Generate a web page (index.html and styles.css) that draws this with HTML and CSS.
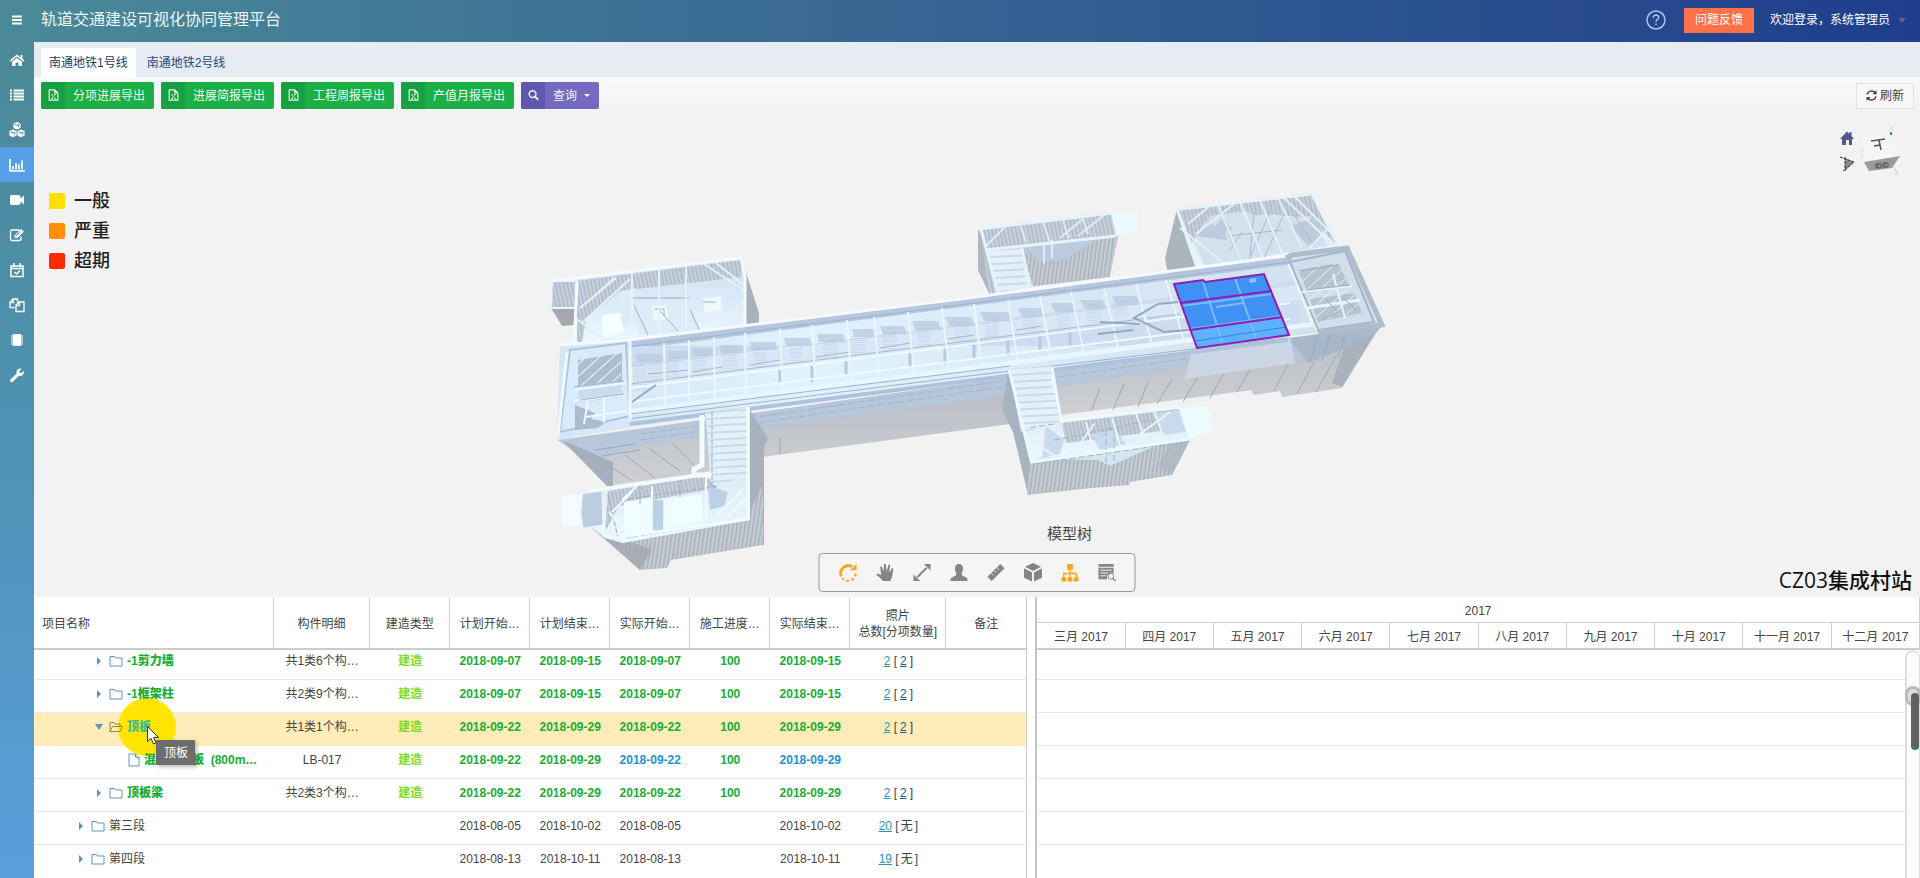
FILE: index.html
```html
<!DOCTYPE html>
<html lang="zh-CN">
<head>
<meta charset="utf-8">
<title>轨道交通建设可视化协同管理平台</title>
<link rel="stylesheet" href="styles.css">
</head>
<body>
<svg class="defs" aria-hidden="true">
  <symbol id="excel" viewBox="0 0 14 16"><path d="M1.5 1.5h7l4 4v9h-11zM8.500 1.500v4h4" fill="none" stroke="currentColor" stroke-width="1.400"/><path d="M4.800 7.500l4.200 5M9 7.500l-4.200 5M4 12.500h2M8 12.500h2M4 7.500h2M8 7.500h2" fill="none" stroke="currentColor"/></symbol>
  <symbol id="folder" viewBox="0 0 14 12"><path d="M1 1.500h4.500l1 1.500h6.500v8h-12z" fill="none" stroke="currentColor"/></symbol>
  <symbol id="opened" viewBox="0 0 14 12"><path d="M1 10.500v-9h4l1 1.500h5v2.500M1 10.500l2.500-5h10l-2.500 5z" fill="none" stroke="currentColor"/></symbol>
  <symbol id="file" viewBox="0 0 12 14"><path d="M1 1h6.500l3.500 3.500v8.500h-10zM7.500 1v3.500h3.500" fill="none" stroke="currentColor"/></symbol>
</svg>

<header class="topbar">
  <button class="menu" aria-label="菜单"><svg viewBox="0 0 10 10"><path d="M0 1.500h10M0 5h10M0 8.500h10" stroke="currentColor" stroke-width="1.800"/></svg></button>
  <h1>轨道交通建设可视化协同管理平台</h1>
  <a class="help" href="#" aria-label="帮助"><svg viewBox="0 0 20 20"><circle cx="10" cy="10" r="9" fill="none" stroke="currentColor" stroke-width="1.500"/><path d="M7.300 7.800c0-3.600 5.400-3.600 5.400-.4 0 2-2.700 2-2.700 4.300M10 13.500v1.800" fill="none" stroke="currentColor" stroke-width="1.500"/></svg></a>
  <button class="feedback">问题反馈</button>
  <button class="user">欢迎登录，系统管理员<i></i></button>
</header>

<div class="shell">
  <nav class="side">
    <a href="#" aria-label="首页"><svg viewBox="0 0 16 16"><path d="M8 2.500l7.500 6-1 1.200L8 4.600 1.500 9.700l-1-1.200zM11.500 3h2v4l-2-1.700zM8 5.800l5 4V14H9.500v-3.500h-3V14H3V9.800z" fill="currentColor"/></svg></a>
    <a href="#" aria-label="列表"><svg viewBox="0 0 16 16"><path d="M1 3.500h2M4.500 3.500H15M1 6.500h2M4.500 6.500H15M1 9.500h2M4.500 9.500H15M1 12.500h2M4.500 12.500H15" stroke="currentColor" stroke-width="2"/></svg></a>
    <a href="#" aria-label="模型"><svg viewBox="0 0 16 16"><g fill="currentColor"><path d="M8 0l3.500 1.500v4.500L8 7.500 4.500 6V1.500z"/><path d="M4 7.500L7.600 9v4.500L4 15.200.4 13.500V9zM12 7.500l3.600 1.500v4.500L12 15.200l-3.600-1.700V9z"/></g><path d="M5.500 2.300L8 3.300l2.500-1M1.500 10L4 11l2.500-1M9.500 10l2.500 1 2.500-1M5.500 12.600v-1.400M13.500 12.600v-1.400M9.500 5V3.600" fill="none" stroke="#4c8fa3"/></svg></a>
    <a href="#" class="on" aria-label="进度统计"><svg viewBox="0 0 16 16"><path d="M1 2v12h15M4 12.500V9M7 12.500V6M10 12.500V7.500M13 12.500V3.500" fill="none" stroke="currentColor" stroke-width="1.700"/></svg></a>
    <a href="#" aria-label="视频"><svg viewBox="0 0 16 16"><path d="M3 3h6.500a2 2 0 0 1 2 2v1.500L15 3.500v9l-3.500-3V11a2 2 0 0 1-2 2H3a2 2 0 0 1-2-2V5a2 2 0 0 1 2-2z" fill="currentColor"/></svg></a>
    <a href="#" aria-label="编辑"><svg viewBox="0 0 16 16"><path d="M10.500 3H3a1.500 1.500 0 0 0-1.500 1.500v7.500A1.500 1.500 0 0 0 3 13.500h7.500A1.500 1.500 0 0 0 12 12v-2.500" fill="none" stroke="currentColor" stroke-width="1.300"/><path d="M5.500 11V8.500L12 2l3 2.500L8.500 11z" fill="currentColor"/><path d="M6.500 9.500l5-5" stroke="#4c8fa3"/></svg></a>
    <a href="#" aria-label="计划"><svg viewBox="0 0 16 16"><path d="M2 4h12v10.500H2zM2 6.500h12M5 1v4M11 1v4M5.500 10l2 2L11 8.500" fill="none" stroke="currentColor" stroke-width="1.500"/></svg></a>
    <a href="#" aria-label="复制"><svg viewBox="0 0 16 16"><path d="M5.500 10.500H1V5l3-3h4.500v3M4.500 2v3.500H1M7 14.500V8l3-3h5v9.500zM10.500 5v3.500H7" fill="none" stroke="currentColor" stroke-width="1.300"/></svg></a>
    <a href="#" aria-label="文档"><svg viewBox="0 0 16 16"><rect x="3.500" y="2" width="9" height="12" rx="1.500" fill="currentColor"/><path d="M2.500 3.500v9M13.500 3.500v9" stroke="currentColor" stroke-dasharray="1 1"/></svg></a>
    <a href="#" aria-label="工具"><svg viewBox="0 0 16 16"><path d="M1.500 12.500l6-6a4 4 0 0 1 5.200-4.800L10.500 4l.3 1.700 1.700.3 2.300-2.200a4 4 0 0 1-5 5l-6 5.900a1.600 1.600 0 0 1-2.300-2.200z" fill="currentColor"/></svg></a>
  </nav>

  <main class="main">
    <div class="tabs"><a href="#" class="on">南通地铁1号线</a><a href="#">南通地铁2号线</a></div>
    <div class="tools">
      <button class="btn"><span><svg><use href="#excel"/></svg></span>分项进展导出</button>
      <button class="btn"><span><svg><use href="#excel"/></svg></span>进展简报导出</button>
      <button class="btn"><span><svg><use href="#excel"/></svg></span>工程周报导出</button>
      <button class="btn"><span><svg><use href="#excel"/></svg></span>产值月报导出</button>
      <button class="btn query"><span><svg viewBox="0 0 12 12"><circle cx="5" cy="5" r="3.700" fill="none" stroke="currentColor" stroke-width="1.600"/><path d="M7.700 7.700l3.500 3.500" stroke="currentColor" stroke-width="2"/></svg></span>查询<i></i></button>
      <button class="refresh"><svg viewBox="0 0 12 12"><path d="M1.200 5A5 5 0 0 1 10 3M10.800 7A5 5 0 0 1 2 9" fill="none" stroke="currentColor" stroke-width="1.600"/><path d="M11.500 0v4.500H7zM.5 12V7.500H5z" fill="currentColor"/></svg>刷新</button>
    </div>

    <section class="viewer">
      <svg class="model" viewBox="34 112 1886 485" role="img" aria-label="CZ03集成村站模型">
        <defs>
          <linearGradient id="lit" x1="0" y1="0" x2="1" y2="0"><stop offset="0" stop-color="#d4e5f6"/><stop offset=".3" stop-color="#e0f2fd"/><stop offset="1" stop-color="#d0dfec"/></linearGradient>
          <linearGradient id="floor" x1="0" y1="0" x2="0" y2="1"><stop offset="0" stop-color="#cbdcf0"/><stop offset="1" stop-color="#ecfaff"/></linearGradient>
          <linearGradient id="wall" x1="0" y1="0" x2="0" y2="1"><stop offset="0" stop-color="#b7bdc6"/><stop offset="1" stop-color="#cfd0d3"/></linearGradient>
          <pattern id="ribs" width="4" height="8" patternUnits="userSpaceOnUse" patternTransform="skewX(-8)"><rect width="4" height="8" fill="#b0b6bf"/><path d="M1 0v8" stroke="#ced4da" stroke-width="1.500"/></pattern>
          <pattern id="fine" width="4" height="8" patternUnits="userSpaceOnUse" patternTransform="skewX(12)"><rect width="4" height="8" fill="#b4becb"/><path d="M1 0v8" stroke="#ccd8e3" stroke-width="1.500"/></pattern>
          <pattern id="diag" width="9" height="9" patternUnits="userSpaceOnUse" patternTransform="rotate(48)"><path d="M0 0v9" stroke="#eef8fd" stroke-width="2"/></pattern>
          <pattern id="steps" width="9" height="7" patternUnits="userSpaceOnUse" patternTransform="skewY(-3)"><rect width="9" height="7" fill="#e2f1fa"/><path d="M0 1h9" stroke="#b4c5d4"/></pattern>
          <clipPath id="slab"><path d="M630 347L1290 264L1318 326L630 415z"/></clipPath>
        </defs>

        <!-- north-west annex -->
        <path d="M741 257L759 313V330L741 340z" fill="#a9b1bb"/>
        <path d="M551 308H575V325L562 326z" fill="#a5a8ae"/>
        <path d="M552 281H577V308H551z" fill="url(#fine)" stroke="#e8f3fa" stroke-width="2"/>
        <path d="M575 280L741 258L745 275V337L575 347z" fill="url(#floor)"/>
        <path d="M577 281L741 260V277L620 291L586 320L582 342H577z" fill="url(#fine)"/>
        <path d="M618 292l18-4v36l-18 4zM634 303h54l12 28-62 4z" fill="#dcecf9"/>
        <path d="M602 315l18-2 4 18-22 8z" fill="#f5ffff"/>
        <path d="M703 298l18-2 1 14-17 3zM652 306l14-1 3 14-15 2z" fill="#edf9fe"/>
        <path d="M703 302h13M654 309h10v7M634 305l14 30M658 309l20 22M690 309l12 27M633 298h56" stroke="#9db0c3" fill="none"/>
        <path d="M632 273v66M659 269v65M686 266v63M580 308l36-30M583 322l47-43M590 300l24-22M710 336l36-38M722 336l24-25M704 264l41 27M716 263l29 23M575 318l40 28" stroke="#e6f2fa" stroke-width="2" fill="none"/>
        <path d="M552 281L741 258L745 276V336M577 281L574 346" fill="none" stroke="#f3fbff" stroke-width="3"/>

        <!-- north entrance -->
        <path d="M978 230V270L992 300H1005L990 235z" fill="#afb9c4"/>
        <path d="M1024 240L1118 236L1110 277L1028 287z" fill="url(#ribs)"/>
        <path d="M980 229L1112 213L1116 236L1030 247L1024 262L1030 298H990z" fill="url(#fine)"/>
        <path d="M988 250L1022 247L1036 298L998 303z" fill="url(#steps)"/>
        <path d="M1026 247L1106 235L1066 259L1040 262z" fill="#bccbdf"/>
        <path d="M1060 238l24-20M1078 236l30-24M986 246l20-20M1020 224l6 18M1042 220l8 22M1062 218l7 20M1082 216l6 18M1044 242v22M1052 240v18" stroke="#dfecf5" stroke-width="2"/>
        <path d="M979 229L1112 213M985 250L1116 236M981 229L1000 301M1022 248l9 50" fill="none" stroke="#e6f3fa" stroke-width="3"/>
        <path d="M1111 213l26-1v21l-21 3z" fill="#eafaff"/>

        <!-- north-east annex -->
        <path d="M1177 209L1165 258L1168 274H1200z" fill="#aab5be"/>
        <path d="M1177 209L1312 193L1340 248L1198 272z" fill="url(#floor)"/>
        <path d="M1179 211L1312 195L1336 244L1310 218L1268 214L1205 222L1192 243z" fill="url(#fine)"/>
        <path d="M1210 216l34-5 22 8 44-3 18 30-124 20-10-24z" fill="#d2e1ee"/>
        <path d="M1197 236l12-14 6 4 6-7 12 10-8 3 2 8zM1290 226l24-8 10 16-16 12z" fill="#bdccdd"/>
        <path d="M1222 216l18 44M1254 212l-4 44M1270 212l-22 50M1284 214l-20 44M1228 236l54-6M1230 250l12-18M1294 214l20 32" stroke="#a8b9c8" fill="none"/>
        <path d="M1218 205l24 58M1240 202l24 58M1260 200l24 58M1278 198l24 50M1188 224l24-20M1196 234l38-30M1294 196l36 36M1284 198l44 42M1310 248l20-22M1180 228l50 40" stroke="#e4f0f7" stroke-width="2" fill="none"/>
        <path d="M1198 270L1177 209L1312 194L1339 247" fill="none" stroke="#e8f3f9" stroke-width="3"/>

        <!-- station side walls -->
        <path d="M562 440L607 486L720 470L762 457L1010 424V377z" fill="url(#wall)"/>
        <path d="M1010 372L1060 415L1252 390L1253 395L1280 391L1282 397L1342 388L1378 330z" fill="url(#wall)"/>
        <path d="M557 440L1382 326L1372 338L1312 364L1290 352L1010 394L762 428L640 446L590 462z" fill="#b5c7dd" opacity=".85"/>
        <path d="M1288 338L1382 326L1368 340L1308 363z" fill="#a8b8c9"/>
        <path d="M1344 348l31-15-33 54-10-4z" fill="#a9b1ba"/>
        <path d="M562 440L607 486H613V462z" fill="#a6b0bd"/>
        <path d="M604 462l27 18M625 455l30 23M650 449l30 22M673 444l22 22M780 438v16M1100 388l-9 23M1124 384l-11 26M1148 382l-10 25M1172 379l-15 25M1198 376l-15 26M1224 373l-14 25M1250 369l-13 23M1288 364l-14 27M1314 362l-17 32M1336 356l-20 36" stroke="#a2a7ad" fill="none"/>
        <path d="M1192 349l98-13 5 27-110 16z" fill="#d0dbea" opacity=".8"/>
        <path d="M640 434L1010 380M640 440L1010 386M1050 378L1190 358M1312 352l50-7M1310 345l58-8" stroke="#9fb5cd" stroke-dasharray="7 3"/>
        <path d="M1318 336l-8 26M1330 334l-8 27M1346 333l-8 24M595 450l40-6M602 456l38-6" stroke="#98a8b9"/>

        <!-- station roof slab -->
        <path d="M560 345L628 338V344L960 303L1286 258L1292 254L1347 247L1383 325L1318 333L1288 336L625 428L557 440z" fill="url(#lit)"/>
        <path d="M628 340L1290 256L1294 264L628 350z" fill="#b0c2db" opacity=".9"/>
        <g clip-path="url(#slab)">
          <path d="M628 346H1300V280L628 368z" fill="#cddcee"/>
          <path d="M628 368L1300 285V300L628 385z" fill="#d9e8f6"/>
          <path d="M636 354h26l1 8h-26zM668 351h20v8h-20zM692 348h21l1 8h-21zM720 345h22l1 8h-22zM750 342h26l1 8h-26zM784 338h26l2 8h-26zM817 334h26l2 8h-26zM852 329h21l2 8h-21zM880 326h24l3 8h-24zM912 321h26l3 9h-26zM945 317h26l4 9h-26zM980 312h28l4 9h-28zM1018 308h24l4 9h-24zM1050 303h22l5 9h-22zM1080 300h22l5 9h-22zM1112 296h24l5 9h-24z" fill="#bccce1" opacity=".8"/>
          <path d="M640 362v30M655 360v24M672 358v20M700 354v20M730 350v20M760 348v20M796 344v20M830 340v20M858 336v18M890 332v20M924 328v20M962 322v20M992 318v20M1030 312v20M1064 308v20M1094 304v20M1120 300v18" stroke="#b1c4dd" stroke-dasharray="1 1" stroke-width="14" opacity=".35"/>
          <path d="M630 384L1180 314M648 374l42-4M692 372l30-5M750 365l30-5M816 357l34-5M880 348l30-5M948 339l26-4M1016 330l26-4M1110 326l42-6" stroke="#a5b8ca" fill="none"/>
          <path d="M780 368v16M812 364v18M846 360v16M910 352v16M945 346v18M974 342v16M1008 338v18M1040 334v16M1070 332v16" stroke="#b3c9e0" stroke-width="3"/>
          <path d="M630 388L1290 303M630 402L1290 319" stroke="#eefaff" stroke-width="2"/>
          <path d="M664 343l1 68M689 340v70M714 337l1 70M745 333l1 72M780 329l3 70M812 325l4 70M847 320l5 70M874 317l6 70M908 312l7 70M942 308l8 70M974 304l9 70M1008 300l11 70M1040 296l13 70M1071 292l14 66M1104 288l16 68M1136 284l18 68M1166 280l20 68M1288 262l26 66" stroke="#eaf6fd" stroke-width="2" fill="none"/>
          <path d="M630 412L1320 324" stroke="#e6f8ff" stroke-width="6"/>
          <path d="M1178 302l-20 2-24 14 30 14 26-2M1100 322l40 2M1098 334l35-4M632 402l24-17" stroke="#93a9bb" stroke-width="2" fill="none"/>
        </g>
        <path d="M628 347L960 305L1290 262M628 419L960 377L1286 338M630 414L1010 366" fill="none" stroke="#9cb2c9"/>
        <path d="M630 424L1288 340" stroke="#adc3db" stroke-width="4"/>
        <path d="M560 345L628 340L960 299L1286 256" fill="none" stroke="#f5faff" stroke-width="3"/>
        <!-- west end shaft -->
        <path d="M570 350L626 343L630 416L560 432z" fill="#d9ebfa" stroke="#b0c5da" stroke-width="2"/>
        <path d="M578 360l44-7v28l-44 5z" fill="#acbfd1"/>
        <path d="M578 388l44-6v15l-44 6z" fill="#c9ddee"/>
        <path d="M575 405l20 8-4 6 16 3-10 6-22 2z" fill="#abbccd"/>
        <path d="M577 359l44-6v28l-44 5z" fill="url(#diag)"/>
        <path d="M574 390l52-7M573 401l52-6M586 417l40-6M588 400l-4 24M604 396v27" stroke="#eefaff" stroke-width="2"/>
        <path d="M574 387l50-6M580 400l44-6" stroke="#9db2c6"/>
        <path d="M567 352L558 436M630 340v80" stroke="#eefaff" stroke-width="3"/>
        <!-- east end shaft -->
        <path d="M1290 262L1345 251L1374 322L1318 330z" fill="#d0dfeb" stroke="#a3b5c5" stroke-width="2"/>
        <path d="M1298 270l40-7 12 24-42 6zM1310 299l44-6 8 20-44 9z" fill="#b5c4d1"/>
        <path d="M1298 270l40-7 24 48-44 11z" fill="url(#diag)" opacity=".7"/>
        <path d="M1302 292l50-6M1345 318l-12-44M1290 268l26 62" stroke="#e8f5fb" stroke-width="2"/>
        <path d="M1308 308l52-8" stroke="#e8f5fb" stroke-width="3"/>
        <path d="M1300 271l38-6M1306 290l44-5M1326 300l12 12-16 8M1344 298l12 12" stroke="#9aadbc" fill="none"/>
        <path d="M1286 258L1292 255L1347 248L1382 325L1318 332" fill="none" stroke="#aebccb" stroke-width="5"/>

        <!-- selected roof panel -->
        <path d="M1174 284L1203 280L1205 282L1264 274L1289 335L1197 348z" fill="#3f92f3"/>
        <path d="M1191 331L1283 318L1289 335L1197 348z" fill="#5fb0fa"/>
        <path d="M1203 282l20 62M1235 278l21 60M1181 306l91-12M1190 329l92-13M1216 307l28-4" stroke="#7dbcfb" stroke-width="2" fill="none"/>
        <path d="M1249 279l7-1v4l-6 1z" fill="#8bc6ff"/>
        <path d="M1196 341l90-14" stroke="#3185dd"/>
        <path d="M1174 284L1203 280L1205 282L1264 274L1289 335L1197 348zM1180 303L1272 291M1190 330L1282 317" fill="none" stroke="#921bb4" stroke-width="2"/>

        <!-- south-west entrance -->
        <path d="M748 407L768 438L764 448V545H745z" fill="#a8b1bc"/>
        <path d="M591 527L640 570L667 568L671 560L763 545V484L745 520z" fill="url(#ribs)"/>
        <path d="M591 527L640 570L652 550z" fill="#a3a8b0" opacity=".8"/>
        <path d="M591 492L710 474L705 413L750 406V520L623 543L605 538L590 526z" fill="url(#floor)"/>
        <path d="M608 491l98-15 11 12-98 18-14 26z" fill="url(#fine)"/>
        <path d="M706 414l42-7v70l-36 8z" fill="url(#steps)"/>
        <path d="M624 502l28-5v34l-28 5zM664 499l38-5v28l-38 6z" fill="#eefdff"/>
        <path d="M653 500h10v30h-10zM708 486l20 6-4 14-14 4z" fill="#bcd0e8"/>
        <path d="M702 415v50l-8 4v6h18" stroke="#f1fcff" stroke-width="5" fill="none"/>
        <path d="M712 412v78M608 494l10 44M622 500l96-14M626 538l116-18M640 485v20M680 478v20" stroke="#9aadc1" stroke-dasharray="5 2"/>
        <path d="M612 512l20-20M622 500l15-14M716 516l26-25M728 516l18-18M609 512l22 24M652 486v20M706 476v45M594 491l12 42" stroke="#f1fcff" stroke-width="2"/>
        <path d="M590 491L710 474M748 407V519L615 538" fill="none" stroke="#f1fcff" stroke-width="3"/>
        <path d="M578 494l24-3 1 34-20 3z" fill="#bccde0" stroke="#e8f6fd"/>
        <path d="M562 496l21-3-3 32-18 1z" fill="#f2fcff"/>

        <!-- south entrance -->
        <path d="M1008 370L1002 410L1013 432L1028 495L1034 464z" fill="#a6b4c0"/>
        <path d="M1030 463L1190 440L1172 475L1130 482V485L1092 488L1027 495z" fill="url(#ribs)"/>
        <path d="M1190 440L1172 475L1158 465L1170 445z" fill="#aeb6c0" opacity=".7"/>
        <path d="M1008 370L1053 366L1060 421L1180 407L1190 439L1030 463z" fill="url(#floor)"/>
        <path d="M1009 370l42-4 12 58-42 8z" fill="url(#steps)"/>
        <path d="M1062 423L1178 409L1184 428L1066 443z" fill="url(#fine)"/>
        <path d="M1046 426l18 14-4 14-18 4zM1090 434l26-4 10 14-26 6zM1154 414l24-4 8 22-24 3z" fill="#c9daed"/>
        <path d="M1034 459L1160 444L1110 466L1098 460z" fill="#d3e4f2"/>
        <path d="M1054 440l98-20M1054 424l-26 4M1034 464l150-22M1106 430v36M1114 428v34" stroke="#9fb2c1" stroke-dasharray="6 3"/>
        <path d="M1086 422l8 30M1112 418l8 28M1136 414l10 27M1154 411l10 27M1030 440l28 18M1074 452l20-28M1140 434l30-22" stroke="#e8f5fb" stroke-width="2"/>
        <path d="M1009 370L1032 462L1190 439M1052 367l9 54L1180 407M1052 375l3 18" fill="none" stroke="#ecf9fd" stroke-width="3"/>
        <path d="M1179 408l29-2 5 27-24 5z" fill="#ecfcff"/>
      </svg>

      <ul class="legend">
        <li><i class="minor"></i>一般</li>
        <li><i class="major"></i>严重</li>
        <li><i class="late"></i>超期</li>
      </ul>

      <svg class="compass" viewBox="0 0 66 56" role="img" aria-label="视图方向">
        <path d="M2 15L9 7.500l2.500 2.500V8h2v4L16 15h-2v6H4v-6z" fill="#55558e"/><path d="M8 16h3v5H8z" fill="#f2f2f2"/>
        <path d="M25 14L54 8 61 33 26 37z" fill="#f5f5f5"/><path d="M24 24v10" stroke="#ddd"/>
        <path d="M26 38l36-6-8 12-23 3z" fill="#9b9b9b"/><path d="M38 40h5v4h-5zM45 39h5v4h-5zM40 39v5M47 38v6" fill="none" stroke="#555"/>
        <path d="M33 17l14-2M41 16l2 10M42 21l-6 1" fill="none" stroke="#555" stroke-width="1.500"/>
        <path d="M7 34l9 4-9 9z" fill="#8a8a8a"/><path d="M2 33l14 5-11 9M7 33v14" fill="none" stroke="#333" stroke-dasharray="3 1"/>
        <path d="M51 1l3 3 3-3M54 4v3" stroke="#ddd" fill="none"/><path d="M53 8v3" stroke="#2a9b46" stroke-width="2"/><path d="M56 43l4 7h-3" stroke="#ccc" fill="none"/>
      </svg>

      <div class="modelbar">
        <button class="hot" aria-label="旋转"><svg viewBox="0 0 20 20"><path d="M3 14A8 8 0 0 1 14.500 4" fill="none" stroke="currentColor" stroke-width="3"/><path d="M12 7.500h7V1z" fill="currentColor"/><path d="M18 11a8 8 0 0 1-14 5" fill="none" stroke="currentColor" stroke-width="2.200" stroke-dasharray="3 2.500"/></svg></button>
        <button aria-label="平移"><svg viewBox="0 0 20 20"><path d="M8 19C6 16 3 14 1 12.500c0-2 3-1.500 5 .5L5 4.500c0-1.500 1.500-1.500 2 0L8.500 9 9 2c0-1.500 2-1.500 2 0l.5 7L13.500 2.500c.5-1.500 2-1 1.800.5L14.500 10l2.500-4c.8-1 2-.5 1.700.7C18 10 18 16 15.500 19z" fill="currentColor"/></svg></button>
        <button aria-label="缩放"><svg viewBox="0 0 20 20"><path d="M5 15L15 5" stroke="currentColor" stroke-width="2"/><path d="M12 1h7v7zM1 12v7h7z" fill="currentColor"/></svg></button>
        <button aria-label="漫游"><svg viewBox="0 0 20 20"><path d="M10 1c5 0 5 6 3 9.500V13l5 2.500c1 1 1 2 1 3.500H1c0-1.500 0-2.500 1-3.500L7 13v-2.500C5 7 5 1 10 1z" fill="currentColor"/></svg></button>
        <button aria-label="测量"><svg viewBox="0 0 20 20"><path d="M14.500 1L19 5.500 5.500 19 1 14.500z" fill="currentColor"/><path d="M5 11l2 2M8 8l2 2M11 5l2 2" stroke="#f4f4f4"/></svg></button>
        <button aria-label="剖切"><svg viewBox="0 0 20 20"><path d="M10 0l8.500 4-8.500 4.500L1.500 4zM.5 5.500L9 10v9.500l-8.500-4zM19.500 5.500L11 10v9.500l8.500-4z" fill="currentColor"/></svg></button>
        <button class="hot"><span>模型树</span><svg viewBox="0 0 20 20"><path d="M7 1h6v6H7zM1 15h5v4.500H1zM7.500 15h5v4.500h-5zM14 15h5v4.500h-5z" fill="currentColor"/><path d="M10 6v9M3.500 15v-4h13v4" fill="none" stroke="currentColor" stroke-width="1.500"/></svg></button>
        <button aria-label="属性"><svg viewBox="0 0 20 20"><path d="M1 1h16v3H1zM1 5h16v6l-3-1-4 3v4H1z" fill="currentColor"/><path d="M3 7.500h12M3 10.500h8M3 13.500h6" stroke="#f4f4f4"/><circle cx="14" cy="14" r="3" fill="none" stroke="currentColor"/><path d="M16 16l3 3" stroke="currentColor" stroke-width="1.500"/></svg></button>
      </div>
      <h2>CZ03集成村站</h2>
    </section>

    <section class="plan">
      <div class="sheet">
        <table>
          <colgroup><col class="c240"><col class="c96"><col class="c80"><col class="c80"><col class="c80"><col class="c80"><col class="c80"><col class="c80"><col class="c96"><col class="c80"></colgroup>
          <thead><tr><th>项目名称</th><th>构件明细</th><th>建造类型</th><th>计划开始…</th><th>计划结束…</th><th>实际开始…</th><th>施工进度…</th><th>实际结束…</th><th>照片<br>总数[分项数量]</th><th>备注</th></tr></thead>
          <tbody>
            <tr class="done"><td><div class="node deep"><i class="arrow"></i><svg><use href="#folder"/></svg><b>-1剪力墙</b></div></td><td>共1类6个构…</td><td>建造</td><td>2018-09-07</td><td>2018-09-15</td><td>2018-09-07</td><td>100</td><td>2018-09-15</td><td><a href="#">2</a> [<a href="#" class="sub">2</a>]</td><td></td></tr>
            <tr class="done"><td><div class="node deep"><i class="arrow"></i><svg><use href="#folder"/></svg><b>-1框架柱</b></div></td><td>共2类9个构…</td><td>建造</td><td>2018-09-07</td><td>2018-09-15</td><td>2018-09-07</td><td>100</td><td>2018-09-15</td><td><a href="#">2</a> [<a href="#" class="sub">2</a>]</td><td></td></tr>
            <tr class="done picked"><td><div class="node deep"><i class="arrow down"></i><svg><use href="#opened"/></svg><b>顶板</b></div></td><td>共1类1个构…</td><td>建造</td><td>2018-09-22</td><td>2018-09-29</td><td>2018-09-22</td><td>100</td><td>2018-09-29</td><td><a href="#">2</a> [<a href="#" class="sub">2</a>]</td><td></td></tr>
            <tr class="done"><td><div class="node leaf"><svg><use href="#file"/></svg><b>混凝土顶板&nbsp; (800m…</b></div></td><td>LB-017</td><td>建造</td><td>2018-09-22</td><td>2018-09-29</td><td class="blue">2018-09-22</td><td>100</td><td class="blue">2018-09-29</td><td></td><td></td></tr>
            <tr class="done"><td><div class="node deep"><i class="arrow"></i><svg><use href="#folder"/></svg><b>顶板梁</b></div></td><td>共2类3个构…</td><td>建造</td><td>2018-09-22</td><td>2018-09-29</td><td>2018-09-22</td><td>100</td><td>2018-09-29</td><td><a href="#">2</a> [<a href="#" class="sub">2</a>]</td><td></td></tr>
            <tr><td><div class="node"><i class="arrow"></i><svg><use href="#folder"/></svg><span>第三段</span></div></td><td></td><td></td><td>2018-08-05</td><td>2018-10-02</td><td>2018-08-05</td><td></td><td>2018-10-02</td><td><a href="#">20</a> [<span class="none">无</span>]</td><td></td></tr>
            <tr><td><div class="node"><i class="arrow"></i><svg><use href="#folder"/></svg><span>第四段</span></div></td><td></td><td></td><td>2018-08-13</td><td>2018-10-11</td><td>2018-08-13</td><td></td><td>2018-10-11</td><td><a href="#">19</a> [<span class="none">无</span>]</td><td></td></tr>
          </tbody>
        </table>
        <div class="halo"></div>
        <div class="tip" role="tooltip">顶板</div>
        <svg class="cursor" viewBox="0 0 12 19"><path d="M.5.500v15l3.500-3.200 2.400 5.700 2.600-1.100-2.400-5.500h4.900z" fill="#fff" stroke="#333"/></svg>
      </div>
      <div class="gantt">
        <table>
          <thead>
            <tr><th colspan="10">2017</th></tr>
            <tr><th>三月 2017</th><th>四月 2017</th><th>五月 2017</th><th>六月 2017</th><th>七月 2017</th><th>八月 2017</th><th>九月 2017</th><th>十月 2017</th><th>十一月 2017</th><th>十二月 2017</th></tr>
          </thead>
          <tbody>
            <tr><td colspan="10"></td></tr><tr><td colspan="10"></td></tr><tr><td colspan="10"></td></tr><tr><td colspan="10"></td></tr><tr><td colspan="10"></td></tr><tr><td colspan="10"></td></tr><tr><td colspan="10"></td></tr>
          </tbody>
        </table>
        <div class="scroll"><i class="ring"></i><i class="thumb"></i></div>
      </div>
    </section>
  </main>
</div>
</body>
</html>
```
FILE: styles.css
```css
* { box-sizing: border-box; }
body {
  margin: 0;
  height: 100vh;
  display: flex;
  flex-direction: column;
  overflow: hidden;
  background: #f2f2f2;
  color: #444;
  font: 12px/18px "Liberation Sans", "Noto Sans CJK SC", sans-serif;
}
button {
  margin: 0;
  padding: 0;
  border: 0;
  background: none;
  color: inherit;
  font: inherit;
}
a { color: inherit; text-decoration: none; }
svg { display: block; }
.defs { position: absolute; width: 0; height: 0; }

.topbar {
  flex: none;
  height: 42px;
  display: flex;
  align-items: center;
  padding: 0 14px 2px 0;
  color: #fff;
  background: linear-gradient(90deg, #4a8a98, #1f3d8c);
}
.menu { width: 34px; height: 40px; margin-right: 7px; }
.menu svg { width: 10px; height: 10px; margin: 0 auto; }
.topbar h1 { flex: 1; margin: 0; font-size: 16px; font-weight: 400; color: #eef5f8; }
.help { color: #a9c4f0; margin-right: 18px; }
.help svg { width: 20px; height: 20px; }
.feedback { height: 25px; padding: 0 11px; background: #ff7148; margin-right: 16px; }
.user { display: flex; align-items: center; gap: 8px; }
.user i { border: 4px solid transparent; border-top: 5px solid #566890; border-bottom: 0; }

.shell { flex: 1; min-height: 0; display: flex; }
.side {
  flex: none;
  width: 34px;
  color: #fff;
  background: linear-gradient(#4b8997, #4f93b4 50%, #5a9fdd);
}
.side a { height: 35px; display: grid; place-items: center; }
.side a.on { background: #559fe8; }
.side svg { width: 16px; height: 16px; }

.main { flex: 1; min-width: 0; display: flex; flex-direction: column; }
.tabs {
  flex: none;
  display: flex;
  padding: 6px 7px 0;
  background: #e7ebf2;
}
.tabs a { padding: 6px 8px 5px; color: #1b4a85; }
.tabs a + a { padding-left: 11px; }
.tabs .on { background: #fff; color: #174068; }

.tools {
  flex: none;
  display: flex;
  align-items: center;
  gap: 7px;
  padding: 5px 6px 3px 7px;
  background: linear-gradient(#fafafa, #f2f2f2);
}
.btn {
  display: flex;
  align-items: center;
  width: 113px;
  height: 27px;
  border-radius: 2px;
  background: #1cae47;
  color: #e9fbee;
  white-space: nowrap;
}
.btn span {
  display: grid;
  place-items: center;
  width: 24px;
  height: 27px;
  margin-right: 8px;
  border-radius: 2px 0 0 2px;
  background: #19a040;
}
.btn svg { width: 11px; height: 14px; margin-bottom: 2px; }
.query { width: 78px; background: #7669c0; }
.query span { background: #6257b0; }
.query i { margin-left: 7px; border: 3px solid transparent; border-top-color: #fff; border-bottom: 0; }
.refresh {
  display: flex;
  align-items: center;
  justify-content: center;
  gap: 3px;
  width: 58px;
  height: 26px;
  margin-left: auto;
  border: 1px solid #e2e2e2;
  background: #f8f8f8;
}
.refresh svg { width: 11px; height: 11px; }

.viewer { flex: 1; min-height: 0; position: relative; background: #f2f2f2; }
.model { position: absolute; inset: 0; width: 100%; height: 100%; }
.legend {
  position: absolute;
  left: 15px;
  top: 74px;
  margin: 0;
  padding: 0;
  list-style: none;
  font-size: 18px;
  font-weight: 500;
  line-height: 30px;
  color: #222;
}
.legend li { display: flex; align-items: center; gap: 9px; }
.legend i { width: 16px; height: 16px; border-radius: 2px; }
.minor { background: #ffde00; }
.major { background: #ff8f00; }
.late { background: #ff2a00; }
.compass { position: absolute; right: 16px; top: 12px; width: 66px; height: 56px; }
.modelbar {
  position: absolute;
  left: 50%;
  bottom: 5px;
  transform: translateX(-50%);
  display: flex;
  gap: 1px;
  padding: 0 10px;
  border: 1px solid #999;
  border-radius: 4px;
  background: #f5f5f5;
  color: #858585;
}
.modelbar button { position: relative; width: 36px; height: 37px; display: grid; place-items: center; }
.modelbar svg { width: 19px; height: 19px; }
.modelbar .hot { color: #f9a51a; }
.modelbar span {
  position: absolute;
  left: 50%;
  bottom: 48px;
  transform: translateX(-50%);
  font-size: 15px;
  color: #444;
  white-space: nowrap;
}
.viewer h2 {
  position: absolute;
  right: 8px;
  bottom: 3px;
  margin: 0;
  font: 500 21px/28px "Open Sans", "Noto Sans CJK SC", sans-serif;
  color: #111;
}

.plan { flex: none; display: flex; gap: 8px; background: #fff; }
.sheet { position: relative; flex: 994 1 0; min-width: 0; border-right: 1px solid #ccc; }
.gantt { position: relative; flex: 884 1 0; min-width: 0; border-left: 2px solid #c4c4c4; }
table { width: 100%; table-layout: fixed; border-collapse: separate; border-spacing: 0; }
.c240 { width: 240px; }
.c96 { width: 96px; }
.c80 { width: 80px; }
th {
  padding: 2px 0 0;
  font-weight: 400;
  color: #444;
  border-right: 1px solid #d2d2d2;
  border-bottom: 2px solid #ccc;
  white-space: nowrap;
  line-height: 16px;
}
.sheet th { height: 53px; }
.sheet th:first-child { text-align: left; padding-left: 8px; }
.sheet th:last-child { border-right: 0; }
.gantt th { height: 27px; }
.gantt tr:first-child th[colspan] { height: 26px; border-bottom: 1px solid #d2d2d2; }
td {
  height: 33px;
  padding: 0 0 9px;
  border-bottom: 1px solid #e8e8e8;
  text-align: center;
  vertical-align: bottom;
  white-space: nowrap;
}
tbody tr:first-child td { height: 30px; }
tbody tr:last-child td { border-bottom: 0; padding-bottom: 10px; }
.done td { font-weight: 700; color: #16ae35; }
.done td:nth-child(2), .done td:nth-child(9) { font-weight: 400; color: #444; }
.done td:nth-child(3) { color: #7bdb1c; }
.done td.blue { color: #1e93d2; }
.picked td { background: #ffecb9; border-bottom-color: #ffecb9; }
td a { color: #2795b8; text-decoration: underline; }
td .sub { color: #22568a; margin: 0 3px; }
.none { margin: 0 2px; }
.node {
  position: relative;
  z-index: 2;
  display: flex;
  align-items: center;
  gap: 4px;
  padding-left: 43px;
  text-align: left;
}
.deep { padding-left: 61px; }
.leaf { padding-left: 94px; }
.node svg { width: 14px; height: 12px; color: #5a95c0; }
.leaf svg { width: 12px; height: 14px; }
.arrow {
  width: 10px;
  height: 8px;
  background: #5b93b8;
  clip-path: polygon(20% 0, 60% 50%, 20% 100%);
}
.down { clip-path: polygon(0 12%, 80% 12%, 40% 88%); }
.picked b { color: #3dbb8c; }
.picked svg { color: #8a8a4a; }
.halo {
  position: absolute;
  z-index: 1;
  left: 84px;
  top: 101px;
  width: 58px;
  height: 58px;
  border-radius: 50%;
  background: #ffe500;
}
.tip {
  position: absolute;
  z-index: 3;
  left: 122px;
  top: 143px;
  padding: 4px 7px 3px 8px;
  background: #6d6d6d;
  color: #fff;
  box-shadow: 2px 2px 4px #0004;
}
.cursor { position: absolute; z-index: 4; left: 113px; top: 129px; width: 12px; height: 19px; }

.scroll {
  position: absolute;
  right: 0;
  top: 53px;
  bottom: 0;
  width: 15px;
  border: 2px solid #ddd;
  border-width: 2px 1px 0 2px;
  border-radius: 8px 8px 0 0;
  background: #fcfcfc;
}
.ring {
  position: absolute;
  left: -2px;
  top: 34px;
  width: 16px;
  height: 20px;
  border: 3px solid #bbb;
  border-radius: 8px;
  background: #ddd;
}
.thumb {
  position: absolute;
  right: 0;
  top: 41px;
  width: 8px;
  height: 57px;
  border-radius: 4px;
  border-bottom: 4px solid #3f7a58;
  background: #606060;
}
```
